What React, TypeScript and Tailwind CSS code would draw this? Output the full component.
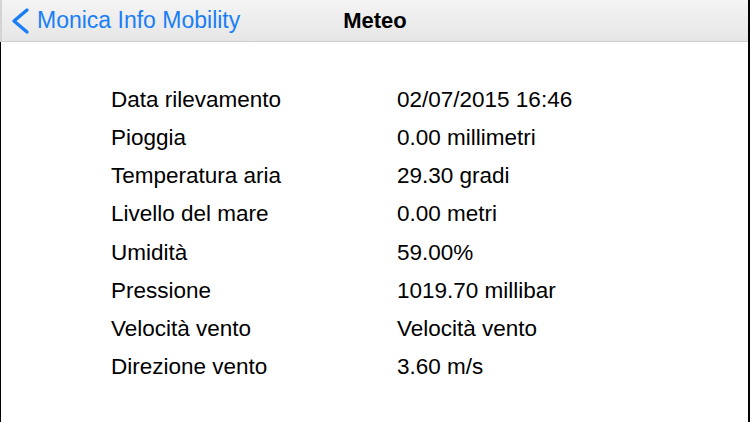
import React from "react";

const rows: [string, string][] = [
  ["Data rilevamento", "02/07/2015 16:46"],
  ["Pioggia", "0.00 millimetri"],
  ["Temperatura aria", "29.30 gradi"],
  ["Livello del mare", "0.00 metri"],
  ["Umidità", "59.00%"],
  ["Pressione", "1019.70 millibar"],
  ["Velocità vento", "Velocità vento"],
  ["Direzione vento", "3.60 m/s"],
];

export default function App() {
  return (
    <div
      className="w-[750px] h-[422px] overflow-hidden bg-white flex flex-col border-r-2 border-black"
      style={{ fontFamily: '"Liberation Sans", Arial, sans-serif' }}
    >
      <div className="h-[42px] shrink-0 relative flex items-center bg-gradient-to-b from-[#f4f4f4] to-[#e6e6e6] border-b border-[#cdcdcd] border-l-2 border-l-[#d4d4d4]">
        <div className="flex items-center pl-[8px] text-[#1a7ff5]">
          <svg width="22" height="28" viewBox="0 0 22 28" className="mr-[5px]">
            <path d="M17 3 L4 14 L17 25" fill="none" stroke="#1a7ff5" strokeWidth="3.4" strokeLinecap="round" strokeLinejoin="round" />
          </svg>
          <span className="text-[23px] leading-none">Monica Info Mobility</span>
        </div>
        <div className="absolute left-0 right-0 top-0 bottom-0 flex items-center justify-center pointer-events-none">
          <span className="text-[22px] font-bold text-black leading-none">Meteo</span>
        </div>
      </div>
      <div className="flex-1 border-l border-black pt-[39px] pl-[110px]">
        {rows.map(([k, v]) => (
          <div key={k} className="h-[38.2px] flex items-center text-[22.5px] text-black leading-none">
            <div className="w-[286px]">{k}</div>
            <div>{v}</div>
          </div>
        ))}
      </div>
    </div>
  );
}
